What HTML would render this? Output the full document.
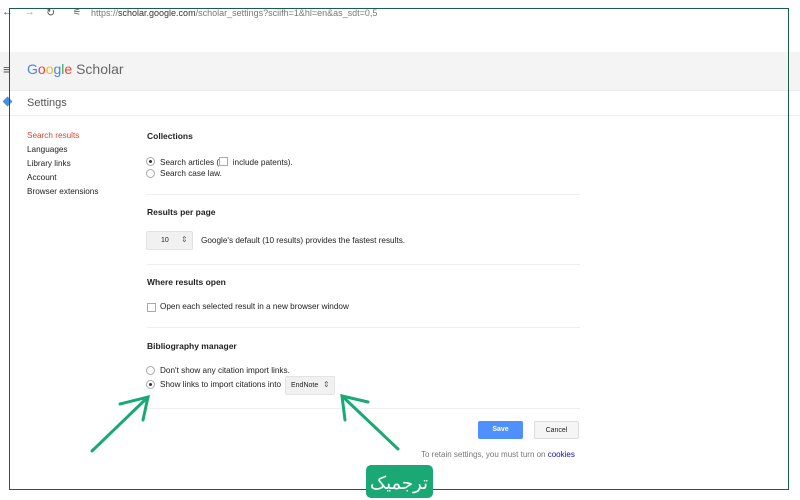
<!DOCTYPE html>
<html><head><meta charset="utf-8"><style>
body{margin:0;width:800px;height:500px;position:relative;overflow:hidden;background:#fff;font-family:"Liberation Sans",Arial,sans-serif;color:#222}
.a{position:absolute;white-space:nowrap}
.s{font-size:8.2px;color:#222}
.h{font-size:8.5px;font-weight:bold;color:#222}
.rad{position:absolute;width:7px;height:7px;border:1px solid #aaa;border-radius:50%;background:#fff}
.rad.on::after{content:"";position:absolute;left:2px;top:2px;width:3px;height:3px;border-radius:50%;background:#333}
.hr{position:absolute;left:147px;width:433px;height:1px;background:#eee}
</style></head><body>
<div class="a" style="left:2px;top:6px;font-size:11px;color:#555">←</div>
<div class="a" style="left:24px;top:6px;font-size:11px;color:#aaa">→</div>
<div class="a" style="left:46px;top:6px;font-size:11px;color:#555">↻</div>
<div class="a" style="left:73px;top:7px;font-size:9px;color:#555">⚟</div>
<div class="a" style="left:91px;top:8px;font-size:9px;color:#777">https://<span style="color:#333">scholar.google.com</span>/scholar_settings?sciifh=1&amp;hl=en&amp;as_sdt=0,5</div>
<div style="position:absolute;left:0;top:52px;width:800px;height:38px;background:#f4f4f4;border-bottom:1px solid #ebebeb"></div>
<div class="a" style="left:3px;top:62px;font-size:13px;color:#555">≡</div>
<div class="a" style="left:27px;top:61px;font-size:14px;"><span style="color:#4285f4">G</span><span style="color:#ea4335">o</span><span style="color:#fbbc05">o</span><span style="color:#4285f4">g</span><span style="color:#34a853">l</span><span style="color:#ea4335">e</span> <span style="color:#666">Scholar</span></div>
<div style="position:absolute;left:0;top:115px;width:800px;height:1px;background:#eee"></div>
<div style="position:absolute;left:4px;top:98px;width:7px;height:7px;background:#4a8fe0;transform:rotate(45deg)"></div>
<div class="a" style="left:27px;top:97px;font-size:11px;color:#555">Settings</div>
<div class="a s" style="left:27px;top:131px;color:#d14836">Search results</div>
<div class="a s" style="left:27px;top:145px">Languages</div>
<div class="a s" style="left:27px;top:159px">Library links</div>
<div class="a s" style="left:27px;top:173px">Account</div>
<div class="a s" style="left:27px;top:187px">Browser extensions</div>
<div class="a h" style="left:147px;top:131px">Collections</div>
<div class="rad on" style="left:146px;top:157px"></div>
<div class="a s" style="left:160px;top:157px">Search articles (<span style="display:inline-block;width:7px;height:7px;border:1px solid #aaa;vertical-align:-1px"></span>&nbsp; include patents).</div>
<div class="rad" style="left:146px;top:169px"></div>
<div class="a s" style="left:160px;top:169px">Search case law.</div>
<div class="hr" style="top:194px"></div>
<div class="a h" style="left:147px;top:207px">Results per page</div>
<div style="position:absolute;left:146px;top:231px;width:45px;height:17px;background:#f1f1f1;border:1px solid #e3e3e3;border-radius:2px"></div>
<div class="a" style="left:161px;top:237px;font-size:7px">10</div>
<div class="a" style="left:181px;top:235px;font-size:8px;color:#666">⇕</div>
<div class="a s" style="left:201px;top:236px">Google's default (10 results) provides the fastest results.</div>
<div class="hr" style="top:264px"></div>
<div class="a h" style="left:147px;top:277px">Where results open</div>
<div style="position:absolute;left:147px;top:303px;width:7px;height:7px;border:1px solid #aaa"></div>
<div class="a s" style="left:160px;top:302px">Open each selected result in a new browser window</div>
<div class="hr" style="top:327px"></div>
<div class="a h" style="left:147px;top:341px">Bibliography manager</div>
<div class="rad" style="left:146px;top:366px"></div>
<div class="a s" style="left:160px;top:366px">Don't show any citation import links.</div>
<div class="rad on" style="left:146px;top:380px"></div>
<div class="a s" style="left:160px;top:380px">Show links to import citations into</div>
<div style="position:absolute;left:285px;top:376px;width:48px;height:17px;background:#f1f1f1;border:1px solid #e3e3e3;border-radius:2px"></div>
<div class="a" style="left:291px;top:382px;font-size:7px">EndNote</div>
<div class="a" style="left:323px;top:380px;font-size:8px;color:#666">⇕</div>
<div class="hr" style="top:408px"></div>
<div style="position:absolute;left:478px;top:421px;width:45px;height:18px;background:#4d90fe;border-radius:2px;color:#fff;font-size:7px;font-weight:bold;text-align:center;line-height:18px">Save</div>
<div style="position:absolute;left:534px;top:421px;width:45px;height:18px;background:#f5f5f5;border:1px solid #ddd;border-radius:2px;font-size:7px;text-align:center;line-height:18px;box-sizing:border-box">Cancel</div>
<div class="a" style="left:421px;top:450px;font-size:8px;color:#777">To retain settings, you must turn on <span style="color:#1a0dab">cookies</span></div>
<svg style="position:absolute;left:0;top:0" width="800" height="500">
<rect x="9.5" y="8.5" width="779" height="481" fill="none" stroke="#1c5e45" stroke-width="1"/>
<g stroke="#1aa874" stroke-width="3" fill="none" stroke-linecap="round">
<line x1="92" y1="451" x2="148" y2="397"/><polyline points="120,404 148,397 143,420"/>
<line x1="398" y1="449" x2="342" y2="396"/><polyline points="345,420 342,396 368,402"/>
</g>
<rect x="366" y="465" width="67" height="33" rx="5" fill="#1aa874"/>
<text x="399" y="489" text-anchor="middle" font-family="Liberation Sans, Noto Sans CJK SC, sans-serif" font-size="18" fill="#fff">ترجمیک</text>
</svg>
</body></html>
